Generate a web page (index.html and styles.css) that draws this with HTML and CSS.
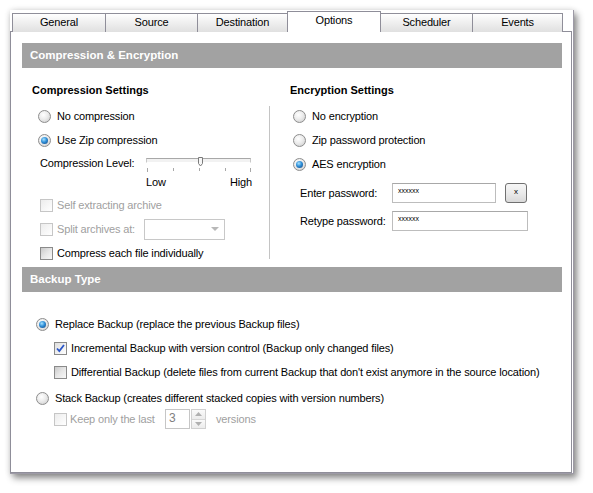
FILE: index.html
```html
<!DOCTYPE html>
<html>
<head>
<meta charset="utf-8">
<link rel="stylesheet" href="styles.css">
</head>
<body>
<div class="window">
  <div class="tabs">
    <div class="tab t1">General</div>
    <div class="tab t2">Source</div>
    <div class="tab t3">Destination</div>
    <div class="tab active">Options</div>
    <div class="tab t5">Scheduler</div>
    <div class="tab t6">Events</div>
  </div>
  <div class="panel">
    <div class="bar">Compression &amp; Encryption</div>
    <div class="columns">
      <div class="col left">
        <div class="heading">Compression Settings</div>
        <div class="row r-radio"><span class="radio"></span><span>No compression</span></div>
        <div class="row r-radio"><span class="radio on"></span><span>Use Zip compression</span></div>
        <div class="row level">
          <span class="level-label">Compression Level:</span>
          <svg class="slider" width="106" height="22" viewBox="0 0 106 22">
            <rect x="0.5" y="6.5" width="104" height="4" fill="#f2f2f2" stroke="#c8c8c8"/>
            <line x1="0.5" y1="6.5" x2="104.5" y2="6.5" stroke="#a8a8a8"/>
            <line x1="0.5" y1="10.5" x2="104.5" y2="10.5" stroke="#ffffff"/>
            <g stroke="#a8a8a8">
              <line x1="1.5" y1="16" x2="1.5" y2="20"/>
              <line x1="27.5" y1="16" x2="27.5" y2="19"/>
              <line x1="53.5" y1="16" x2="53.5" y2="19"/>
              <line x1="79.5" y1="16" x2="79.5" y2="19"/>
              <line x1="104.5" y1="16" x2="104.5" y2="20"/>
            </g>
            <polygon points="52.5,5.5 56.5,5.5 56.5,11.5 54.5,14 52.5,11.5" fill="#f6f6f6" stroke="#7a7a7a"/>
          </svg>
        </div>
        <div class="row scale"><span>Low</span><span>High</span></div>
        <div class="row r-check first-check disabled"><span class="check dis"></span><span>Self extracting archive</span></div>
        <div class="row r-check disabled"><span class="check dis"></span><span class="split-label">Split archives at:</span><span class="combo"><svg width="9" height="5" viewBox="0 0 9 5"><polygon points="0,0 8,0 4,4" fill="#b8b8b8"/></svg></span></div>
        <div class="row r-check"><span class="check en"></span><span>Compress each file individually</span></div>
      </div>
      <div class="divider"></div>
      <div class="col right">
        <div class="heading">Encryption Settings</div>
        <div class="row r-radio"><span class="radio"></span><span>No encryption</span></div>
        <div class="row r-radio"><span class="radio"></span><span>Zip password protection</span></div>
        <div class="row r-radio"><span class="radio on"></span><span>AES encryption</span></div>
        <div class="row pw first-pw">
          <span class="pw-label">Enter password:</span>
          <span class="input short">xxxxxx</span>
          <span class="btn">x</span>
        </div>
        <div class="row pw">
          <span class="pw-label">Retype password:</span>
          <span class="input long">xxxxxx</span>
        </div>
      </div>
    </div>
    <div class="bar">Backup Type</div>
    <div class="backup">
      <div class="row b-radio first-b"><span class="radio on"></span><span>Replace Backup (replace the previous Backup files)</span></div>
      <div class="row b-check"><span class="check en on"><svg width="11" height="11" viewBox="0 0 11 11"><path d="M2 5.5 L4.3 8 L9 2" fill="none" stroke="#2a56c8" stroke-width="1.8"/></svg></span><span>Incremental Backup with version control (Backup only changed files)</span></div>
      <div class="row b-check"><span class="check en"></span><span>Differential Backup (delete files from current Backup that don't exist anymore in the source location)</span></div>
      <div class="row b-radio stack"><span class="radio"></span><span>Stack Backup (creates different stacked copies with version numbers)</span></div>
      <div class="row b-check keep disabled">
        <span class="check dis"></span>
        <span class="keep-label">Keep only the last</span>
        <span class="spin-input">3</span>
        <span class="spin-arrows">
          <span class="arr up"><svg width="7" height="4" viewBox="0 0 7 4"><polygon points="0,4 7,4 3.5,0" fill="#b0b0b0"/></svg></span>
          <span class="arr down"><svg width="7" height="4" viewBox="0 0 7 4"><polygon points="0,0 7,0 3.5,4" fill="#b0b0b0"/></svg></span>
        </span>
        <span class="versions">versions</span>
      </div>
    </div>
  </div>
</div>
</body>
</html>
```
FILE: styles.css
```css
* { box-sizing: border-box; }
html, body { margin: 0; padding: 0; background: #ffffff; }
body {
  font-family: "Liberation Sans", Arial, sans-serif;
  font-size: 11px;
  letter-spacing: -0.15px;
  color: #000;
  width: 593px;
  height: 493px;
  overflow: hidden;
}
.window {
  margin: 10px 0 0 10px;
  width: 564px;
  height: 464px;
  background: #fff;
  border-right: 1px solid #9d9aa6;
  border-bottom: 1px solid #9d9aa6;
  box-shadow: 3px 4px 7px rgba(0,0,0,0.45), 0 0 6px rgba(0,0,0,0.12);
}
.tabs {
  display: flex;
  padding: 2px 0 0 2px;
  height: 21px;
  align-items: flex-end;
}
.tab {
  height: 19px;
  width: 91px;
  border: 1px solid #8f8e99;
  border-bottom: none;
  border-right: none;
  background: linear-gradient(#ffffff 0%, #f0f0f0 45%, #e0e0e0 100%);
  text-align: center;
  line-height: 17px;
  position: relative;
  top: 1px;
}
.tab.t1 { width: 93px; }
.tab.t2 { width: 92px; }
.tab.t3 { width: 90px; }
.tab.t5 { width: 91px; }
.tab.t6 { width: 91px; border-right: 1px solid #8f8e99; }
.tab.active {
  width: 94px;
  height: 21px;
  background: #fff;
  border: 1px solid #8f8e99;
  border-bottom: none;
  line-height: 17px;
  z-index: 2;
  top: 1px;
}
.tab.active + .tab { border-left: none; }
.panel {
  width: 562px;
  height: 442px;
  border: 1px solid #8f8e99;
  padding: 11px 9px 0 11px;
  background: #fff;
}
.bar {
  height: 25px;
  background: #a2a2a2;
  color: #fff;
  font-weight: bold;
  font-size: 11.5px;
  letter-spacing: 0;
  line-height: 25px;
  padding-left: 8px;
}
.columns {
  display: flex;
  height: 199px;
}
.col.left { width: 247px; }
.col.right { flex: 1; }
.divider {
  width: 1px;
  background: #c4c4c4;
  margin-top: 38px;
  height: 153px;
}
.heading {
  font-weight: bold;
  letter-spacing: 0;
  line-height: 16px;
  margin-top: 14px;
  margin-bottom: 6px;
}
.left .heading { padding-left: 10px; }
.right .heading { padding-left: 20px; }
.row {
  display: flex;
  align-items: center;
  white-space: nowrap;
}
.r-radio { height: 24px; gap: 6px; }
.left .r-radio { padding-left: 16px; }
.right .r-radio { padding-left: 23px; }
.radio {
  width: 13px;
  height: 13px;
  border-radius: 50%;
  border: 1px solid #8d8d8d;
  background: radial-gradient(circle at 40% 35%, #ffffff 0%, #ececec 45%, #c9c9c9 100%);
  display: flex;
  align-items: center;
  justify-content: center;
  flex: none;
}
.radio.on::after {
  content: "";
  width: 7px;
  height: 7px;
  border-radius: 50%;
  background: radial-gradient(circle at 40% 35%, #a6e2ff 0%, #2f8fd8 45%, #123f78 100%);
}
.level { height: 22px; padding-left: 18px; }
.level-label { width: 106px; }
.slider { display: block; }
.scale {
  height: 16px;
  margin-left: 124px;
  width: 106px;
  justify-content: space-between;
}
.r-check { height: 24px; gap: 4px; padding-left: 18px; }
.first-check { margin-top: 3px; }
.check {
  width: 13px;
  height: 13px;
  flex: none;
  display: flex;
  align-items: center;
  justify-content: center;
}
.check.dis {
  border: 1px solid #c6c6c6;
  background: linear-gradient(135deg, #ececec, #ffffff);
}
.check.en {
  border: 1px solid #8a8a8a;
  background: linear-gradient(135deg, #c9c9c9 0%, #e6e6e6 50%, #f8f8f8 100%);
}
.check.en.on { background: linear-gradient(135deg, #dedede, #ffffff); }
.disabled { color: #a0a0a0; }
.split-label { width: 83px; }
.combo {
  width: 81px;
  height: 21px;
  border: 1px solid #c8c8c8;
  display: flex;
  justify-content: flex-end;
  align-items: center;
  padding-right: 4px;
}
.combo svg { display: block; }
.pw { height: 22px; padding-left: 30px; }
.first-pw { margin-top: 6px; }
.pw + .pw { margin-top: 6px; }
.pw-label { width: 92px; }
.input {
  height: 20px;
  border: 1px solid #bdbdbd;
  border-top-color: #a8a8a8;
  font-size: 7px;
  letter-spacing: 0;
  line-height: 10px;
  padding: 2px 5px;
  align-self: center;
}
.input.short { width: 104px; }
.input.long { width: 136px; }
.btn {
  margin-left: 9px;
  width: 22px;
  height: 20px;
  border: 1px solid #707070;
  border-radius: 3px;
  background: linear-gradient(#f6f6f6 0%, #ebebeb 50%, #d9d9d9 100%);
  font-size: 8px;
  text-align: center;
  line-height: 15px;
}
.backup { padding-left: 14px; }
.b-radio { height: 24px; gap: 6px; }
.first-b { margin-top: 20px; }
.b-check { height: 24px; gap: 4px; padding-left: 18px; }
.stack { margin-top: 3px; height: 22px; }
.keep { height: 20px; gap: 0; }
.keep .check { margin-right: 3px; }
.keep-label { width: 95px; }
.spin-input {
  width: 25px;
  height: 20px;
  border: 1px solid #c6c6c6;
  color: #808080;
  font-size: 12px;
  padding-left: 3px;
  line-height: 17px;
}
.spin-arrows {
  width: 15px;
  height: 20px;
  display: flex;
  flex-direction: column;
  margin-left: 1px;
  border: 1px solid #d0d0d0;
}
.arr {
  flex: 1;
  display: flex;
  align-items: center;
  justify-content: center;
  background: linear-gradient(#fafafa, #ececec);
}
.arr.up { border-bottom: 1px solid #d6d6d6; }
.arr svg { display: block; }
.versions { margin-left: 10px; color: #a0a0a0; }
```
